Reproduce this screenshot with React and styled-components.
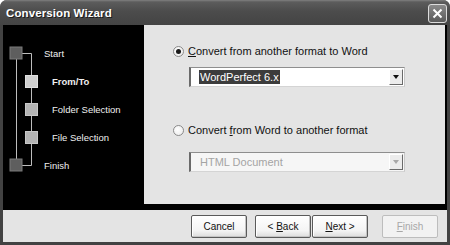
import React from "react";
import styled, { createGlobalStyle } from "styled-components";

const GlobalStyle = createGlobalStyle`
  html, body {
    margin: 0;
    padding: 0;
    background: #ffffff;
  }
  body {
    font-family: "Liberation Sans", Arial, sans-serif;
  }
`;

const Window = styled.div`
  width: 450px;
  height: 245px;
  box-sizing: border-box;
  display: flex;
  flex-direction: column;
  background: #424242;
  border-radius: 7px 7px 0 0;
  padding: 0 3px 3px 3px;
  overflow: hidden;
`;

const TitleBar = styled.div`
  height: 25px;
  margin: 0 -3px;
  padding: 0 3px 0 6px;
  display: flex;
  align-items: center;
  justify-content: space-between;
  background: linear-gradient(#808080 0, #5c5c5c 2px, #4c4c4c 45%, #444444 100%);
`;

const Title = styled.span`
  color: #ffffff;
  font-weight: bold;
  font-size: 11.5px;
  letter-spacing: 0.1px;
  text-shadow: 1px 1px 0 #1c1c1c;
`;

const CloseButton = styled.div`
  width: 19px;
  height: 19px;
  box-sizing: border-box;
  margin-top: 2px;
  border: 1px solid #dcdcdc;
  border-radius: 3px;
  background: linear-gradient(#8a8a8a, #5a5a5a);
  display: flex;
  align-items: center;
  justify-content: center;
`;

const Content = styled.div`
  height: 185px;
  display: flex;
  background: #000000;
`;

const Sidebar = styled.div`
  width: 141px;
  display: flex;
`;

const StepList = styled.div`
  display: flex;
  flex-direction: column;
  padding-top: 14px;
`;

const Step = styled.div`
  height: 28px;
  display: flex;
  align-items: center;
  padding-left: ${(p) => (p.$sub ? 9 : 1)}px;
  color: #f0f0f0;
  font-size: 9.5px;
  font-weight: ${(p) => (p.$active ? "bold" : "normal")};
`;

const Panel = styled.div`
  width: 301px;
  height: 179px;
  box-sizing: border-box;
  background: #e4e4e4;
  padding: 20px 0 0 29px;
  display: flex;
  flex-direction: column;
`;

const Option = styled.div`
  display: flex;
  flex-direction: column;
  gap: ${(p) => p.$gap}px;
  margin-bottom: ${(p) => p.$after || 0}px;
`;

const RadioRow = styled.label`
  height: 12px;
  display: flex;
  align-items: center;
  gap: 4px;
  font-size: 11px;
  color: #111111;
`;

const Radio = styled.span`
  width: 11px;
  height: 11px;
  box-sizing: border-box;
  border-radius: 50%;
  border: 1px solid #8a8a8a;
  background: radial-gradient(circle at 40% 40%, #ffffff, #e8e8e8);
  display: flex;
  align-items: center;
  justify-content: center;
  &::after {
    content: "";
    width: 5px;
    height: 5px;
    border-radius: 50%;
    background: #1a1a1a;
    display: ${(p) => (p.$checked ? "block" : "none")};
  }
`;

const Key = styled.span`
  text-decoration: underline;
  text-underline-offset: 1px;
`;

const Select = styled.div`
  margin-left: 16px;
  width: 216px;
  height: 20px;
  box-sizing: border-box;
  display: flex;
  align-items: center;
  justify-content: space-between;
  background: ${(p) => (p.$disabled ? "#f6f6f6" : "#ffffff")};
  border-top: 1px solid #8e8e8e;
  border-left: 2px solid #6a6a6a;
  border-right: 1px solid #c8c8c8;
  border-bottom: 1px solid #d4d4d4;
  padding: 0 1px 0 8px;
  font-size: 11px;
`;

const SelectValue = styled.span`
  padding: 1px 1px;
  background: ${(p) => (p.$disabled ? "transparent" : "#3c3c3c")};
  color: ${(p) => (p.$disabled ? "#a4a4a4" : "#ffffff")};
`;

const ArrowButton = styled.span`
  width: 14px;
  height: 16px;
  box-sizing: border-box;
  background: #ececec;
  border-top: 1px solid #ffffff;
  border-left: 1px solid #ffffff;
  border-right: 1px solid #6a6a6a;
  border-bottom: 1px solid #6a6a6a;
  display: flex;
  align-items: center;
  justify-content: center;
  &::after {
    content: "";
    border-left: 3.5px solid transparent;
    border-right: 3.5px solid transparent;
    border-top: 4px solid ${(p) => (p.$disabled ? "#a8a8a8" : "#111111")};
  }
`;

const Footer = styled.div`
  height: 32px;
  background: #e4e4e4;
  display: flex;
  align-items: center;
  justify-content: flex-end;
  padding-right: 9px;
`;

const ButtonGroup = styled.div`
  display: flex;
  gap: 1px;
  margin-right: ${(p) => p.$after || 0}px;
`;

const Button = styled.div`
  width: 56px;
  height: 23px;
  box-sizing: border-box;
  display: flex;
  align-items: center;
  justify-content: center;
  border: 1px solid ${(p) => (p.$disabled ? "#bdbdbd" : "#5a5a5a")};
  border-radius: 2px;
  background: ${(p) =>
    p.$disabled ? "#f2f2f2" : "linear-gradient(#ffffff, #f4f4f4 70%, #dcdcdc)"};
  box-shadow: ${(p) =>
    p.$disabled ? "none" : "inset -1px -1px 0 #c4c4c4, inset 1px 1px 0 #ffffff"};
  color: ${(p) => (p.$disabled ? "#a8a8a8" : "#111111")};
  font-size: 10px;
`;

const StepTree = () => (
  <svg width="40" height="185" viewBox="0 0 40 185">
    <g stroke="#bdbdbd" strokeWidth="1" fill="none">
      <line x1="13.5" y1="34" x2="13.5" y2="134" />
      <polyline points="19,28.5 28.5,28.5 28.5,140.5 19,140.5" />
    </g>
    <rect x="7" y="22" width="12" height="12" fill="#5e5e5e" stroke="#7a7a7a" />
    <rect x="22.5" y="50.5" width="12" height="12" fill="#cfcfcf" stroke="#e0e0e0" />
    <rect x="22.5" y="78.5" width="12" height="12" fill="#b4b4b4" stroke="#c8c8c8" />
    <rect x="22.5" y="106.5" width="12" height="12" fill="#b4b4b4" stroke="#c8c8c8" />
    <rect x="7" y="134" width="12" height="12" fill="#5e5e5e" stroke="#7a7a7a" />
  </svg>
);

export default function App() {
  return (
    <>
      <GlobalStyle />
      <Window>
        <TitleBar>
          <Title>Conversion Wizard</Title>
          <CloseButton>
            <svg width="11" height="11" viewBox="0 0 11 11">
              <path d="M1.5 1.5 L9.5 9.5 M9.5 1.5 L1.5 9.5" stroke="#ffffff" strokeWidth="2" />
            </svg>
          </CloseButton>
        </TitleBar>
        <Content>
          <Sidebar>
            <StepTree />
            <StepList>
              <Step>Start</Step>
              <Step $sub $active>From/To</Step>
              <Step $sub>Folder Selection</Step>
              <Step $sub>File Selection</Step>
              <Step>Finish</Step>
            </StepList>
          </Sidebar>
          <Panel>
            <Option $gap={10} $after={37}>
              <RadioRow>
                <Radio $checked />
                <span>
                  <Key>C</Key>onvert from another format to Word
                </span>
              </RadioRow>
              <Select>
                <SelectValue>WordPerfect 6.x</SelectValue>
                <ArrowButton />
              </Select>
            </Option>
            <Option $gap={16}>
              <RadioRow>
                <Radio />
                <span>
                  Convert <Key>f</Key>rom Word to another format
                </span>
              </RadioRow>
              <Select $disabled>
                <SelectValue $disabled>HTML Document</SelectValue>
                <ArrowButton $disabled />
              </Select>
            </Option>
          </Panel>
        </Content>
        <Footer>
          <ButtonGroup $after={8}>
            <Button>Cancel</Button>
          </ButtonGroup>
          <ButtonGroup $after={14}>
            <Button>
              &lt;&nbsp;<Key>B</Key>ack
            </Button>
            <Button>
              <Key>N</Key>ext &gt;
            </Button>
          </ButtonGroup>
          <Button $disabled>
            <Key>F</Key>inish
          </Button>
        </Footer>
      </Window>
    </>
  );
}
